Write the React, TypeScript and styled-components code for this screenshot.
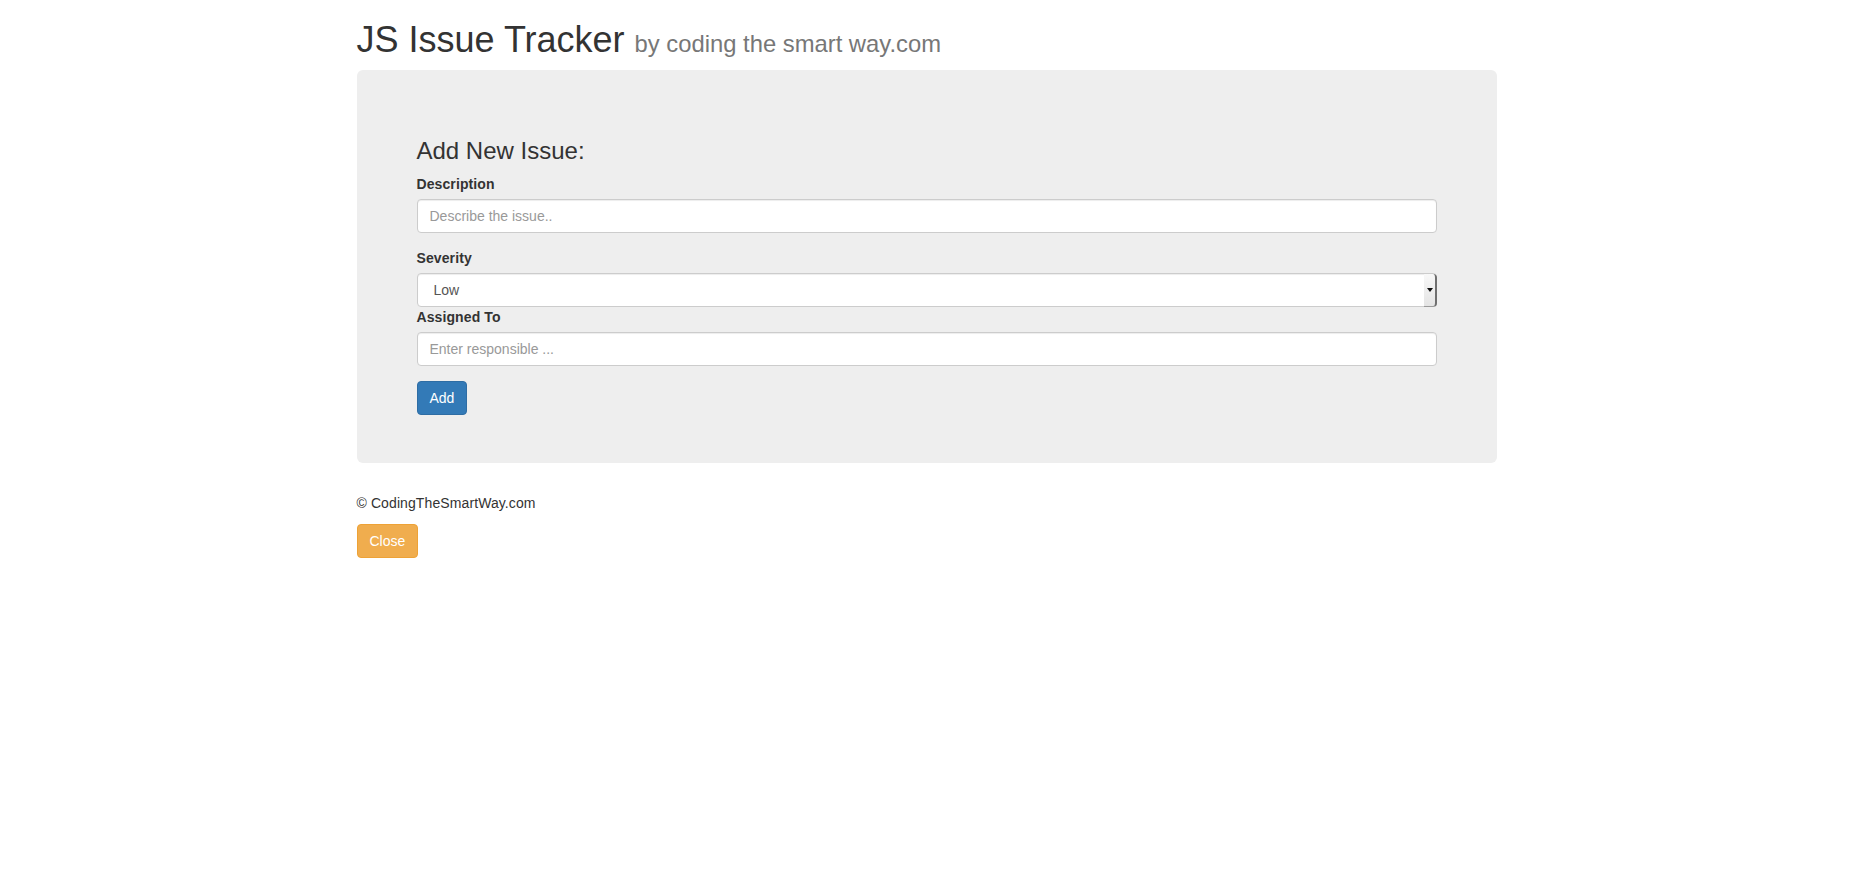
import styled, { createGlobalStyle } from 'styled-components'

const GlobalStyle = createGlobalStyle`
  * { box-sizing: border-box; }
  body {
    margin: 0;
    font-family: "Liberation Sans", Arial, Helvetica, sans-serif;
    font-size: 14px;
    line-height: 1.42857143;
    color: #333;
    background: #fff;
  }
`

const Container = styled.div`
  width: 1170px;
  margin: 0 auto;
  padding: 0 15px;
`

const PageTitle = styled.h1`
  margin: 20px 0 10px;
  font-size: 36px;
  font-weight: 500;
  line-height: 1.1;
  color: #333;

  small {
    font-size: 23.8px;
    font-weight: 400;
    color: #777;
  }
`

const Jumbotron = styled.div`
  padding: 48px 60px;
  margin-bottom: 30px;
  background: #eee;
  border-radius: 6px;
`

const FormTitle = styled.h3`
  margin: 20px 0 10px;
  font-size: 24px;
  font-weight: 500;
  line-height: 1.1;
`

const FormGroup = styled.div<{ $tight?: boolean }>`
  margin-bottom: ${p => (p.$tight ? '0' : '15px')};
`

const Label = styled.label`
  display: inline-block;
  max-width: 100%;
  margin-bottom: 5px;
  font-weight: 700;
  letter-spacing: 0.1px;
`

const Input = styled.input`
  display: block;
  width: 100%;
  height: 34px;
  padding: 6px 12px;
  font: inherit;
  font-size: 14px;
  color: #555;
  background: #fff;
  border: 1px solid #ccc;
  border-radius: 4px;
  box-shadow: inset 0 1px 1px rgba(0, 0, 0, 0.075);
  outline: none;

  &::placeholder {
    color: #999;
  }
`

// native-looking select: white field, narrow grey drop button on the right
const SelectWrap = styled.div`
  position: relative;

  &::after {
    content: '';
    position: absolute;
    top: 1px;
    right: 0;
    bottom: 0;
    width: 11px;
    background: linear-gradient(#f8f8f8, #e4e4e4);
    border-right: 2px solid #6f6f6f;
    border-bottom: 1px solid #9a9a9a;
    border-radius: 0 4px 4px 0;
    pointer-events: none;
  }

  &::before {
    content: '';
    position: absolute;
    top: 15px;
    right: 4px;
    border-left: 3px solid transparent;
    border-right: 3px solid transparent;
    border-top: 4px solid #111;
    z-index: 1;
    pointer-events: none;
  }
`

const Select = styled.select`
  display: block;
  width: 100%;
  height: 34px;
  padding: 6px 12px 6px 16px;
  font: inherit;
  font-size: 14px;
  color: #555;
  background: #fff;
  border: 1px solid #ccc;
  border-radius: 4px;
  box-shadow: inset 0 1px 1px rgba(0, 0, 0, 0.075);
  appearance: none;
  outline: none;
`

const Button = styled.button<{ $variant: 'primary' | 'warning' }>`
  display: inline-block;
  padding: 6px 12px;
  font: inherit;
  font-size: 14px;
  line-height: 1.42857143;
  color: #fff;
  border: 1px solid ${p => (p.$variant === 'primary' ? '#2e6da4' : '#eea236')};
  background: ${p => (p.$variant === 'primary' ? '#337ab7' : '#f0ad4e')};
  border-radius: 4px;
  cursor: pointer;
`

const Footer = styled.footer`
  p {
    margin: 1px 0 11px;
    letter-spacing: 0.1px;
  }
`

export default function App() {
  return (
    <>
      <GlobalStyle />
      <Container>
        <PageTitle>
          JS Issue Tracker <small>by coding the smart way.com</small>
        </PageTitle>
        <Jumbotron>
          <FormTitle>Add New Issue:</FormTitle>
          <form onSubmit={e => e.preventDefault()}>
            <FormGroup>
              <Label htmlFor="desc">Description</Label>
              <Input id="desc" type="text" placeholder="Describe the issue.." />
            </FormGroup>
            <FormGroup $tight>
              <Label htmlFor="sev">Severity</Label>
              <SelectWrap>
                <Select id="sev" defaultValue="Low">
                  <option value="Low">Low</option>
                  <option value="Medium">Medium</option>
                  <option value="High">High</option>
                </Select>
              </SelectWrap>
            </FormGroup>
            <FormGroup>
              <Label htmlFor="assigned">Assigned To</Label>
              <Input id="assigned" type="text" placeholder="Enter responsible ..." />
            </FormGroup>
            <Button type="submit" $variant="primary">Add</Button>
          </form>
        </Jumbotron>
        <Footer>
          <p>© CodingTheSmartWay.com</p>
          <Button type="button" $variant="warning">Close</Button>
        </Footer>
      </Container>
    </>
  )
}
